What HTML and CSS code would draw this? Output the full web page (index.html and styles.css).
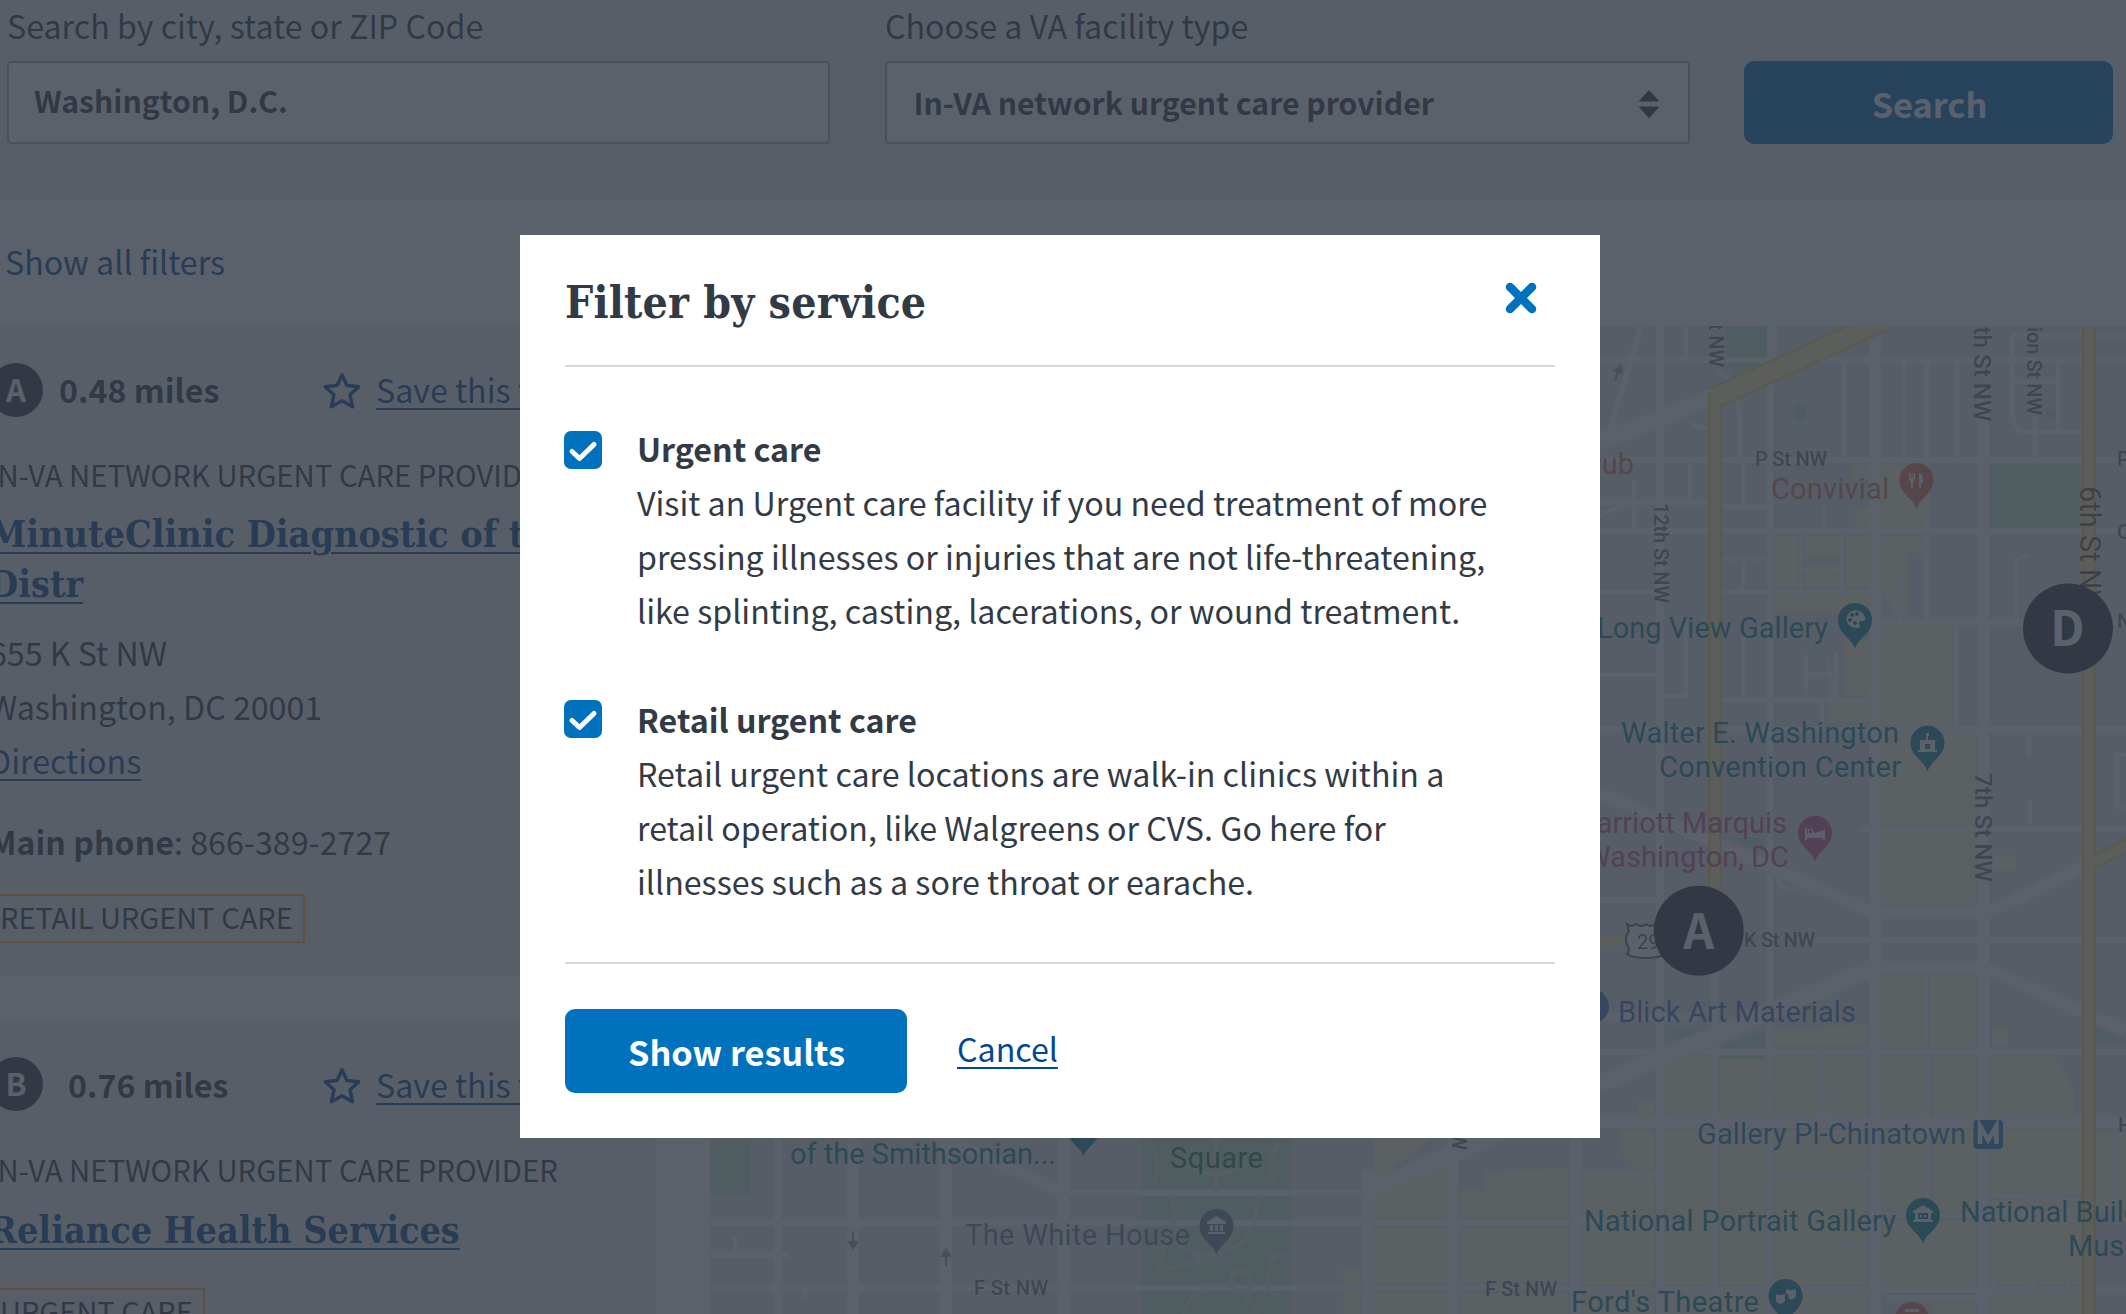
FILE: index.html
```html
<!DOCTYPE html>
<html lang="en">
<head>
<meta charset="utf-8">
<title>Find VA locations</title>
<link rel="stylesheet" href="styles.css">
</head>
<body>
<div class="page">
  <form class="search">
    <label class="field field-location">
      <span class="field-label">Search by city, state or ZIP Code</span>
      <span class="control control-input">Washington, D.C.</span>
    </label>
    <label class="field field-type">
      <span class="field-label">Choose a VA facility type</span>
      <span class="control control-select">In-VA network urgent care provider
        <svg class="sort-icon" viewBox="0 0 22 30"><path d="M11 1 21.500 12.600H.5zM.5 17.500H21.500L11 29.200z"/></svg>
      </span>
    </label>
    <button class="btn btn-search" type="button">Search</button>
  </form>

  <div class="filters"><a class="filters-link">Show all filters</a></div>

  <div class="content">
    <div class="results">
      <article class="card">
        <div class="card-head">
          <span class="marker">A</span>
          <strong class="distance">0.48 miles</strong>
          <svg class="star" viewBox="0 0 38 38"><path d="M19 2.700 23.900 13.500 35.800 14.700 27 22.700 29.600 34.800 19 28.800 8.400 34.800 11 22.700 2.200 14.700 14.100 13.500z"/></svg>
          <a class="link">Save this facility</a>
        </div>
        <p class="type">IN-VA NETWORK URGENT CARE PROVIDER</p>
        <h3 class="name"><a>MinuteClinic Diagnostic of the<br>Distr</a></h3>
        <p class="address">655 K St NW<br>Washington, DC 20001<br><a class="link">Directions</a></p>
        <p class="phone"><strong>Main phone</strong>: 866-389-2727</p>
        <span class="tag">RETAIL URGENT CARE</span>
      </article>
      <article class="card card-b">
        <div class="card-head">
          <span class="marker">B</span>
          <strong class="distance">0.76 miles</strong>
          <svg class="star" viewBox="0 0 38 38"><path d="M19 2.700 23.900 13.500 35.800 14.700 27 22.700 29.600 34.800 19 28.800 8.400 34.800 11 22.700 2.200 14.700 14.100 13.500z"/></svg>
          <a class="link">Save this facility</a>
        </div>
        <p class="type">IN-VA NETWORK URGENT CARE PROVIDER</p>
        <h3 class="name"><a>Reliance Health Services</a></h3>
        <span class="tag">URGENT CARE</span>
      </article>
    </div>

    <svg class="map" viewBox="710 326 1416 988">
      <defs>
        <path id="pin" d="M0 29C-2.500 18-17 14-17 0A17 17 0 0 1 17 0C17 14 2.500 18 0 29z"/>
      </defs>
      <rect class="land" x="709" y="326" width="1417" height="988"/>

      <g class="park">
        <path d="M1725 326h50l-4 14 3 20-37 17-11-17z"/>
        <path d="M1990 465h90v63h-90zM1795 404h11v17h-11zM2046 411h9v8h-9z"/>
        <path d="M1721 837h43v12zM1670 1029h37l-35 12zM1720 1048l44-18v18zM1720 1055h44v4h-44zM2096 1027l30 13v2h-30z"/>
        <path d="M709 1142h41v53h-41zM1142 1137h149v55h-149zM1142 1194h149v120h-149z"/>
      </g>
      <g class="blocks">
        <path d="M1775 536h22v51h-22zM1805 536h34v21h-34zM1805 565h34v22h-34zM1846 536h23v51h-23zM1775 594h94v19h-94z"/>
        <path d="M1882 465h43v62h-43zM1851 465h18v15h-18zM1855 507h14v20h-14zM1882 537h43v16h-17v64h-10l-16-24zM1882 625h70v100h-70zM1843 640h26v55h-26zM1827 655l9 25v20h33v22h-42z"/>
        <path d="M1882 733h94v92h-94zM1882 833h94v70h-94zM1882 975h41v72h-41zM1930 975h46v72h-46zM1993 855h22v15h-22zM1993 1028h14v18h-14z"/>
        <path d="M1773 1030l94-6v22h-94zM1665 1060l20-3h27v60h-47zM1720 1059h46v58h-46zM1774 1055h93v62h-93zM1882 1055h43v62h-43zM1933 1055h43v62h-43zM1990 1055h64l20 35v27h-84zM1638 1101h16v14h-16z"/>
        <path d="M1619 1130h35v41h-15l-20-20zM1665 1130h47v155h-47zM1720 1130h46v155h-46zM1774 1130h93v41h-93zM1774 1178h93v107h-93zM1882 1130h43v81h-43zM1933 1130h43v81h-43zM1990 1130h91v65h-91zM1882 1220h94v73h-94zM1990 1200h91v85h-91zM1583 1178h71v107h-71zM2096 1132h17v80h-17zM2118 1132h8v90h-8z"/>
        <path d="M1665 1293h47v21h-47zM1720 1293h46v21h-46zM1774 1293h93v21h-93zM1990 1293h91v21h-91zM1933 1302h43v12h-43zM1583 1293h71v21h-71z"/>
        <path d="M1374 1137h60l-60 44zM1374 1200l72-48v66h-72zM1485 1172l83-4v50h-108v-28h25zM1374 1228h72v55h-72zM1460 1228h108v55h-108zM1374 1293h72v21h-72zM1460 1293h108v21h-108zM1343 1267h17v47h-17z"/>
      </g>

      <g class="road r3">
        <path d="M1686 326v34M1775 326v34M1844 360v100M1904 360v100M1957 360v100M1824 506v25M1634 480v49M1690 460v47M1743 460v46M1720 559h50M1743 559v33M1801 531v70M1842 531v70M1801 570h41M1720 592h160M1600 592h60M1900 570v50"/>
        <path d="M1743 635v65M1720 700h150M1600 675h60M1686 622v74h-24M1806 655v40M1806 674h34M1836 652v47M1822 700v30M1956 622v107M2012 335h114M2012 335v75q2 22 12 22h60M2012 382h45M2058 362v70M2035 415v43M2016 620v-60l14-6"/>
        <path d="M1717 372q20 5 23 45v43M1690 422q8 8 22 5M1600 516l32-16M2030 800v24M2029 733v24M2117 755v52h9M2114 755h12M1822 1055v62M1720 1088h150M1926 975v72M1828 1090v27"/>
        <path d="M1777 878q6 16 20 9M2115 1130v90M1990 1196l90 3M1868 1246h-28l-4 12M1994 1270v20M2033 1275v12M2068 1275v12M735 1255v-20M805 1288v10"/>
      </g>
      <g class="road r5">
        <path d="M1600 360h526M1600 460h526M1600 531h526M1875 622h251M1600 729.500h526M1860 829h266M1600 900h60M1800 940h326M1600 1052h526M1583 1175h77M1774 1175h101M1882 1215h200M1583 1290h543M1600 502h115M1720 507h50M1886 1298h92"/>
        <path d="M1927 360v265M1928 1055v160M1770 326v988M1610 430l31-103"/>
        <path d="M709 1222.700h658M1367 1222.700h240M709 1255h79M709 1288h874M1063 1192.700h304M1576 1175h30"/>
      </g>
      <g class="road r7"><path d="M1660 326v988M1715 890v424M777.500 1137v177M1600 942h60M1600 1017h100"/></g>
      <g class="road r11">
        <path d="M853 1137v177M946 1137v177M1063.500 1137v177M1367.700 1170v144M1453 1137v177M1576 1137v177M1875 326v988M1983 400v914M1600 1122h526"/>
        <path d="M925 1130l138 62M1600 793l275 120h112l102-49M1870 967h115l104 48 37 15"/>
      </g>
      <g class="road r15"><path d="M1600 442l114-45M1592 1087l128-54 155-66M1366 1192l140-62"/></g>

      <g class="garden">
        <path d="M1173 1195q0 30 8 52q10 8 30 8q45-5 47-60M1158 1270l14-50M1195 1250l5 12-40 8M1216 1137v55M1210 1165h12M1175 1158q40 32 80 0M1150 1142q15 30 0 45M1280 1142q-18 20-4 40M1183 1314q10-28 35-30q26 2 40 30M1232 1272h18v18h-18zM1291 1255h-15q-8 5-8 30q0 10 12 10"/>
      </g>

      <g class="avenue">
        <path class="edge" d="M1715 890V397L1885 320"/><path class="edge" d="M2089 326v988M2089 864l47-23"/>
        <path class="fill" d="M1715 890V397L1885 320"/><path class="fill" d="M2089 320v1000M2089 864l47-23"/>
        <path class="edge wide" d="M1714 398L1885 320"/><path class="fill wide" d="M1714 398L1885 320"/>
        <path class="fill" d="M1600 941h50"/>
      </g>

      <g class="arrow">
        <path d="M853 1231v16M946 1250v16M1615 381l4-13"/><path class="head" d="M847 1241h12l-6 9zM940 1257h12l-6-9zM1613 371l10 4-2-11z"/>
      </g>

      <g class="street s20">
        <text x="1755" y="466" textLength="72">P St NW</text>
        <text x="1744" y="947" textLength="71">K St NW</text>
        <text x="974" y="1295" textLength="74">F St NW</text>
        <text x="1485" y="1296" textLength="72">F St NW</text>
        <text x="2117" y="466">P St</text><text x="2117" y="539">O St</text><text x="2117" y="628">N St</text><text x="2118" y="1132">H</text>
        <text transform="translate(1653.500 503) rotate(90)" textLength="100">12th St NW</text>
        <text transform="translate(1708.500 367) rotate(90)" text-anchor="end">13th St NW</text>
        <text transform="translate(2027 415) rotate(90)" text-anchor="end">Marion St NW</text>
        <text transform="translate(1452 1150) rotate(90)" text-anchor="end">10th St NW</text>
      </g>
      <g class="street s24">
        <text transform="translate(1974 421.500) rotate(90)" text-anchor="end">7th St NW</text>
        <text transform="translate(1975 773) rotate(90)" textLength="109">7th St NW</text>
      </g>
      <g class="street brown"><text transform="translate(2080 486) rotate(90)">6th St NW</text></g>

      <g class="place">
        <g class="food">
          <text x="1634" y="474" text-anchor="end">Pub</text>
          <text x="1771" y="499" textLength="118">Convivial</text>
          <use href="#pin" x="1916.500" y="480"/><use href="#pin" x="1912" y="1319"/>
        </g>
        <g class="sight">
          <text x="1597" y="638" textLength="231">Long View Gallery</text>
          <text x="1621" y="743" textLength="278">Walter E. Washington</text>
          <text x="1659" y="777" textLength="242">Convention Center</text>
          <text x="1584" y="1231" textLength="312">National Portrait Gallery</text>
          <text x="1960" y="1222">National Building</text>
          <text x="2068" y="1256">Museum</text>
          <text x="1571" y="1312" textLength="188">Ford's Theatre</text>
          <text x="790" y="1164" textLength="266">of the Smithsonian...</text>
          <use href="#pin" x="1855" y="620"/><use href="#pin" x="1927.500" y="742.700"/><use href="#pin" x="1923" y="1215"/><use href="#pin" x="1785.500" y="1296"/><use href="#pin" x="1083.500" y="1128"/>
        </g>
        <g class="hotel">
          <text x="1787" y="833" text-anchor="end">Marriott Marquis</text>
          <text x="1789" y="867" text-anchor="end">Washington, DC</text>
          <use href="#pin" x="1815" y="832.700"/>
        </g>
        <g class="shop"><circle cx="1592" cy="1006.500" r="17"/><text x="1618" y="1022" textLength="238">Blick Art Materials</text></g>
        <g class="metro">
          <text x="1697" y="1144" textLength="269">Gallery Pl-Chinatown</text>
          <rect x="1973.500" y="1120" width="29.500" height="29" rx="4"/>
          <path class="glyph-line" d="M1980 1144v-18l8.200 14 8.200-14v18"/>
        </g>
        <g class="green"><text x="1170" y="1168" textLength="93">Square</text></g>
        <g class="civic"><text x="965" y="1245" textLength="225">The White House</text><use href="#pin" x="1216.500" y="1226"/></g>
      </g>

      <g class="pin-icon">
        <path d="M1909 473v6q0 2 2 2.500v7h2v-7q2-.5 2-2.500v-6h-1.500v5h-1v-5h-1v5h-1v-5zM1919 488v-15q4 1 4 5v5h-2v5z"/>
        <path fill-rule="evenodd" d="M1855 610a10 9 0 1 0 3 18q3-1 1-4t4-3q3-1 2-4-2-6-10-7zm-5 5a2 2 0 1 1 0 .1zm5-1a2 2 0 1 1 0 .1zm-7 6a2 2 0 1 1 0 .1zm5 3a2 2 0 1 1 0 .1z"/>
        <path fill-rule="evenodd" d="M1920 740h6v-7h3v3h-1v4h7v10h2v2h-19v-2h2zm5 4v5h5v-5z"/>
        <path fill-rule="evenodd" d="M1805 828h2v5h1v-4h5l1 4 11-3v10h-2v-2h-16v2h-2zm4 2v3h3v-3z"/>
        <path fill-rule="evenodd" d="M1913 1211l10-6 10 6v2h-2v7h2v2h-20v-2h2v-7h-2zm5 2v6h10v-6zm2 2h2v2h-2zm4 0h2v2h-2z"/>
        <path d="M1207 1222l9.500-6 9.500 6v2h-19zM1210 1225h3v6h-3zM1215 1225h3v6h-3zM1220 1225h3v6h-3zM1208 1232h17v2h-17z"/>
        <path d="M1776 1294q5 2 9 0v7q-5 6-9 0zM1786 1289q5 2 10 0v7q-3 5-7 3l-1-5h-2z"/>
        <path d="M1905 1309h14v3h-14z"/>
      </g>

      <g class="shield"><path d="M1627 924q4 4 9 0 5 4 10 0 5 4 10 0 5 4 9 0l4 6q-6 20-2 24-9 4-21 4-13 0-19-4 4-4 0-9-3-8 2-14z"/><text x="1637" y="949">29</text></g>

      <g class="result-pin">
        <circle cx="1698.700" cy="930.700" r="45"/><text x="1698.700" y="948.500">A</text>
        <circle cx="2068" cy="628.500" r="45"/><text x="2067.500" y="646">D</text>
      </g>
    </svg>
  </div>
</div>

<div class="overlay">
  <section class="modal" role="dialog">
    <header class="modal-head">
      <h2 class="modal-title">Filter by service</h2>
      <svg class="close" viewBox="0 0 32 32"><path d="M5 5 27 27M27 5 5 27"/></svg>
    </header>
    <div class="options">
      <div class="option">
        <span class="checkbox"><svg viewBox="0 0 38 38"><path d="M8 20.500 15.500 27.500 30 13.500"/></svg></span>
        <div class="option-text">
          <strong>Urgent care</strong>
          <p>Visit an Urgent care facility if you need treatment of more<br>pressing illnesses or injuries that are not life-threatening,<br>like splinting, casting, lacerations, or wound treatment.</p>
        </div>
      </div>
      <div class="option option-retail">
        <span class="checkbox"><svg viewBox="0 0 38 38"><path d="M8 20.500 15.500 27.500 30 13.500"/></svg></span>
        <div class="option-text">
          <strong>Retail urgent care</strong>
          <p>Retail urgent care locations are walk-in clinics within a<br>retail operation, like Walgreens or CVS. Go here for<br>illnesses such as a sore throat or earache.</p>
        </div>
      </div>
    </div>
    <footer class="modal-foot">
      <button class="btn btn-results" type="button">Show results</button>
      <a class="link cancel">Cancel</a>
    </footer>
  </section>
</div>
</body>
</html>
```

FILE: styles.css
```css
* { box-sizing: border-box; }

body {
  margin: 0;
  width: 2126px;
  height: 1314px;
  overflow: hidden;
  background: #fff;
  color: #323a45;
  font: 400 32.2px/54.1px "Noto Sans CJK SC", "Open Sans", sans-serif;
}

p, h2, h3 { margin: 0; }

.page { height: 1314px; overflow: hidden; }

/* Search bar */
.search {
  display: flex;
  height: 199px;
  padding-left: 7px;
  background: #f1f1f1;
}
.field { display: flex; flex-direction: column; white-space: nowrap; }
.field-location { width: 823px; margin-right: 55px; }
.field-type { width: 805px; margin-right: 54px; }
.field-label { height: 61px; line-height: 50px; }
.control {
  display: flex;
  align-items: center;
  height: 83px;
  border: 2px solid #aeb0b5;
  border-radius: 4px;
  background: #fff;
  font-size: 30.2px;
  font-weight: 700;
}
.control-input { padding: 0 0 4px 25px; }
.control-select { justify-content: space-between; padding: 0 28px 0 26.5px; }
.sort-icon { width: 22px; height: 30px; margin-top: 3px; fill: #323a45; }

.btn {
  padding: 0;
  border: 0;
  border-radius: 10px;
  background: #0071bc;
  color: #fff;
  font: 700 34.3px/84px "Noto Sans CJK SC", "Open Sans", sans-serif;
}
.btn-search { width: 369px; height: 83px; margin-top: 61px; padding-left: 2px; }

.filters { height: 127px; padding: 35px 0 0 5px; }
.filters-link { color: #004795; }

/* Results list */
.content { display: grid; grid-template-columns: 655px 1416px; column-gap: 55px; }
.results { display: flex; flex-direction: column; gap: 45px; }
.card {
  height: 649.5px;
  padding: 36.5px 0 0;
  background: #f1f1f1;
  white-space: nowrap;
}
.card > *:not(.card-head) { margin-left: -11px; }
.card-head { display: flex; align-items: center; height: 54px; margin-left: -11px; }
.marker {
  width: 54px;
  height: 54px;
  border-radius: 50%;
  background: #323a45;
  color: #fff;
  font-size: 31px;
  font-weight: 700;
  line-height: 51px;
  text-align: center;
}
.distance { width: 264px; margin-left: 16px; }
.card-b .distance { width: 255px; margin-left: 25px; }
.star { width: 38px; height: 38px; margin: 3px 15px 0 0; fill: none; stroke: #004795; stroke-width: 3.4; stroke-linejoin: round; }
.link {
  color: #004795;
  text-decoration: underline;
  text-decoration-thickness: 2px;
  text-underline-offset: 5px;
}
.type { margin-top: 30.5px; font-size: 29.3px; }
.name {
  margin-top: 8px;
  font: 700 37.4px/50px "DejaVu Serif Condensed", "DejaVu Serif", serif;
  color: #004795;
}
.name a {
  text-decoration: underline;
  text-decoration-thickness: 2px;
  text-underline-offset: 5px;
}
.address { margin-top: 15.5px; }
.phone { margin-top: 27px; }
.tag {
  display: inline-block;
  height: 49px;
  margin-top: 26px;
  padding: 0 10px 0 9px;
  border: 2px solid #fdb81e;
  font-size: 29px;
  line-height: 40px;
}
.card-b .name { margin-top: 9px; }
.card-b .tag { margin-top: 33px; }

/* Map */
.map { display: block; width: 1416px; height: 988px; font-family: Roboto, sans-serif; }
.land { fill: #e8ebf0; }
.park { fill: #c8eacb; }
.blocks { fill: #fcf8da; }
.road { fill: none; stroke: #fff; }
.r3 { stroke-width: 4; }
.r5 { stroke-width: 6; }
.r7 { stroke-width: 8; }
.r11 { stroke-width: 12; }
.r15 { stroke-width: 17; }
.garden { fill: none; stroke: #e8ebf0; stroke-width: 3; }
.avenue { fill: none; }
.edge { stroke: #f4d679; stroke-width: 14; }
.fill { stroke: #fdedb0; stroke-width: 9; }
.edge.wide { stroke-width: 22; }
.fill.wide { stroke-width: 18; }
.arrow { fill: #9aa3ba; stroke: #9aa3ba; stroke-width: 2; }
.arrow .head { stroke: none; }
.street { fill: #74787e; stroke: #fff; stroke-opacity: .5; stroke-width: 2; paint-order: stroke; font-weight: 500; }
.s20 { font-size: 20px; }
.s24 { font-size: 24.300px; }
.brown { font-size: 29px; fill: #7d5b3c; font-weight: 400; }
.place { font-size: 29px; }
.food { fill: #d97a5a; }
.sight { fill: #12889b; }
.hotel { fill: #d0608f; }
.shop { fill: #4a78c8; }
.metro { fill: #2288c2; }
.green { fill: #2f8553; }
.civic { fill: #72829a; }
.glyph-line { fill: none; stroke: #fff; stroke-width: 4.500; }
.pin-icon { fill: #fff; }
.shield { fill: #fff; stroke: #60646a; stroke-width: 2; }
.shield text { fill: #60646a; stroke: none; font-size: 20px; }
.result-pin { fill: #323a45; }
.result-pin text {
  fill: #fff;
  font: 700 48px "Noto Sans CJK SC", sans-serif;
  text-anchor: middle;
}

/* Modal */
.overlay {
  position: fixed;
  inset: 0;
  padding: 234.5px 0 0 520px;
  background: rgba(50, 58, 69, .8);
}
.modal { width: 1080px; height: 903px; padding: 0 45px; background: #fff; }
.modal-head {
  display: flex;
  align-items: center;
  justify-content: space-between;
  height: 132.5px;
  padding: 0 18px 3px 0;
  border-bottom: 2px solid #d6d7d9;
}
.modal-title {
  padding-top: 7px;
  font: 700 44.2px/54px "DejaVu Serif Condensed", "DejaVu Serif", serif;
  letter-spacing: .2px;
}
.close { width: 32px; height: 32px; fill: none; stroke: #0071bc; stroke-width: 8.500; stroke-linecap: round; }
.options { display: flex; flex-direction: column; gap: 54.800px; padding-top: 53.5px; }
.option { display: flex; gap: 35px; margin-left: -1px; }
.option-text { white-space: nowrap; }
.option-text strong { display: block; }
.checkbox { width: 38px; height: 38px; margin-top: 10.5px; border-radius: 7px; background: #0071bc; }
.option-retail .checkbox { margin-top: 8.5px; }
.checkbox svg { display: block; fill: none; stroke: #fff; stroke-width: 5; stroke-linecap: round; stroke-linejoin: round; }
.modal-foot {
  display: flex;
  gap: 50px;
  margin-top: 54px;
  padding-top: 45px;
  border-top: 2px solid #d6d7d9;
}
.btn-results { width: 342px; height: 84px; padding-left: 1px; }
.cancel { margin-top: 11.5px; }
```
